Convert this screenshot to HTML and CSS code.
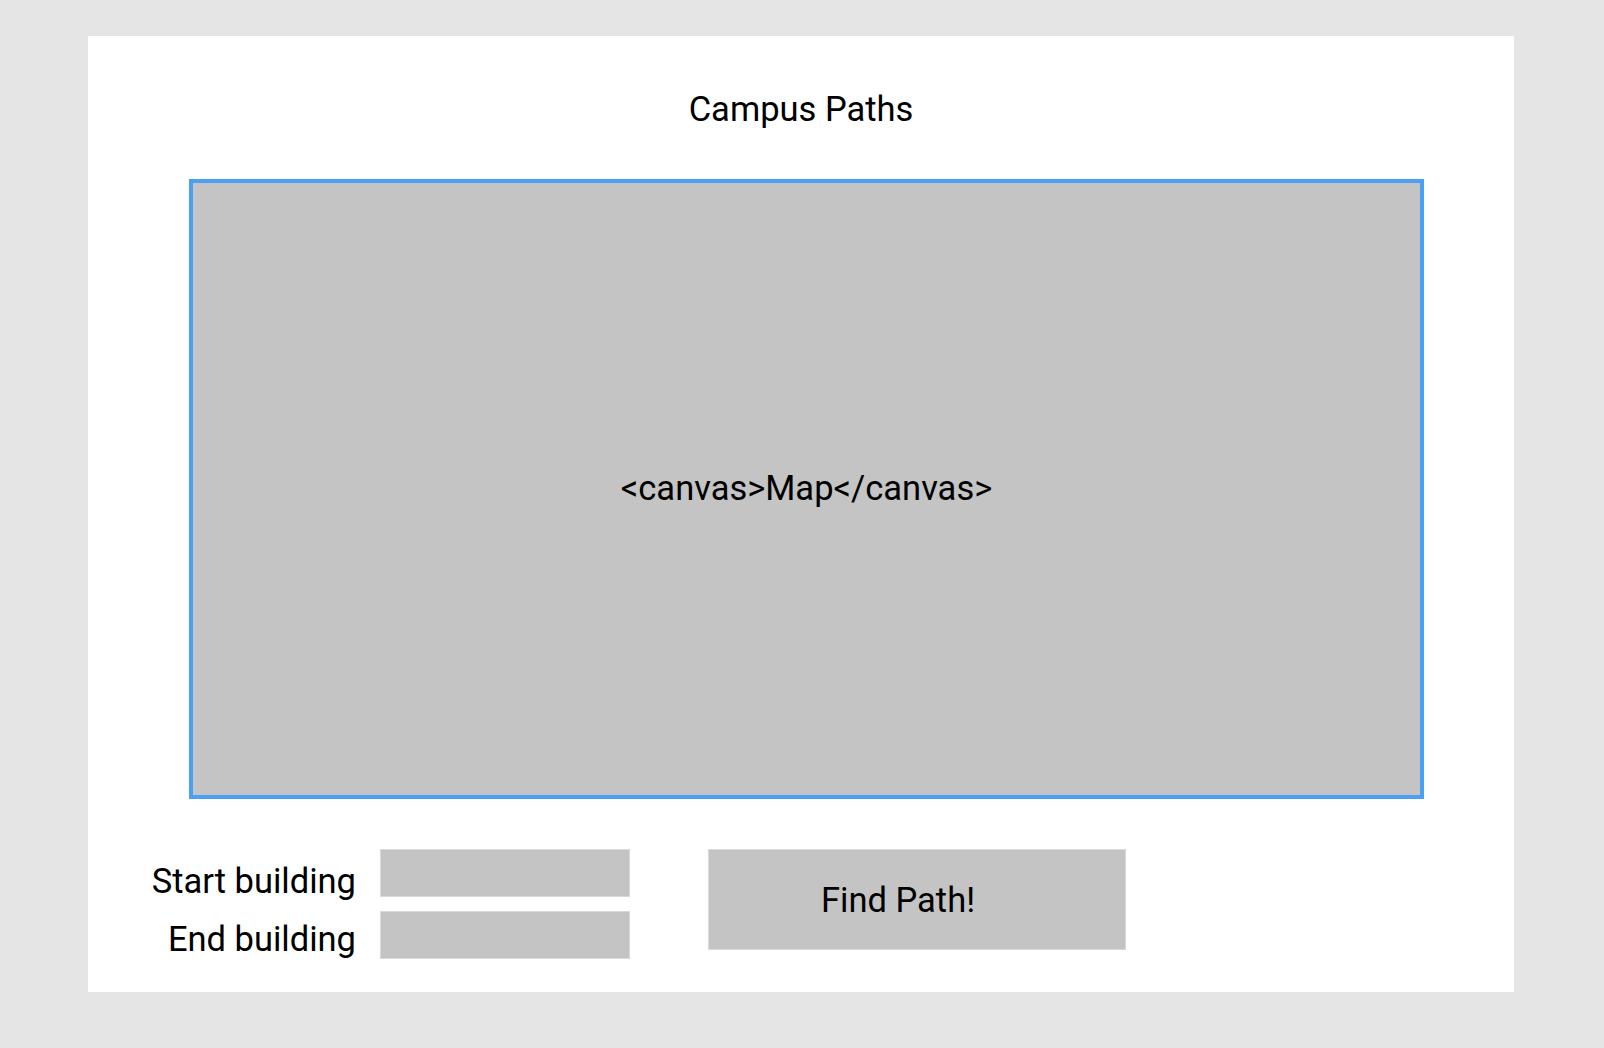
FILE: index.html
```html
<!DOCTYPE html>
<html lang="en">
<head>
<meta charset="utf-8">
<title>Campus Paths</title>
<link rel="stylesheet" href="styles.css">
</head>
<body>
<main class="card">
  <h1 class="title">Campus Paths</h1>
  <div class="map">&lt;canvas&gt;Map&lt;/canvas&gt;</div>
  <div class="controls">
    <div class="labels">
      <label class="label" for="start">Start building</label>
      <label class="label" for="end">End building</label>
    </div>
    <div class="fields">
      <input class="field" id="start" type="text">
      <input class="field" id="end" type="text">
    </div>
    <button class="find" type="button">Find Path!</button>
  </div>
</main>
</body>
</html>
```

FILE: styles.css
```css
* { box-sizing: border-box; }

html, body {
  margin: 0;
  padding: 0;
}

body {
  background: #e5e5e5;
  font-family: Roboto, "Liberation Sans", Arial, sans-serif;
  color: #000;
  padding: 36px 90px 56px 88px;
}

.card {
  background: #ffffff;
  width: 1426px;
  height: 956px;
  padding: 53px 0 0 0;
  display: flex;
  flex-direction: column;
}

.title {
  margin: 0;
  text-align: center;
  font-weight: 400;
  font-size: 34.5px;
  line-height: 40px;
}

.map {
  margin: 50px 0 0 101px;
  width: 1235px;
  height: 620px;
  background: #c4c4c4;
  border: 4px solid #4ba0f5;
  display: flex;
  align-items: center;
  justify-content: center;
  font-size: 34.5px;
  padding-bottom: 2px;
}

.controls {
  margin: 50px 0 0 42px;
  display: flex;
  align-items: flex-start;
}

.labels {
  width: 226px;
  padding-top: 3px;
  display: flex;
  flex-direction: column;
  align-items: flex-end;
}

.label {
  font-size: 34.5px;
  line-height: 58px;
  height: 58px;
  white-space: nowrap;
}

.fields {
  margin-left: 24px;
  display: flex;
  flex-direction: column;
  gap: 14px;
}

.field {
  display: block;
  width: 250px;
  height: 48px;
  margin: 0;
  background: #c4c4c4;
  border: 1px solid #d9d9d9;
  outline: none;
}

.find {
  margin: 0 0 0 78px;
  width: 418px;
  height: 101px;
  background: #c4c4c4;
  border: 1px solid #d9d9d9;
  font-family: Roboto, "Liberation Sans", Arial, sans-serif;
  font-size: 34.5px;
  color: #000;
  padding: 0 38px 0 0;
  text-align: center;
}
```
